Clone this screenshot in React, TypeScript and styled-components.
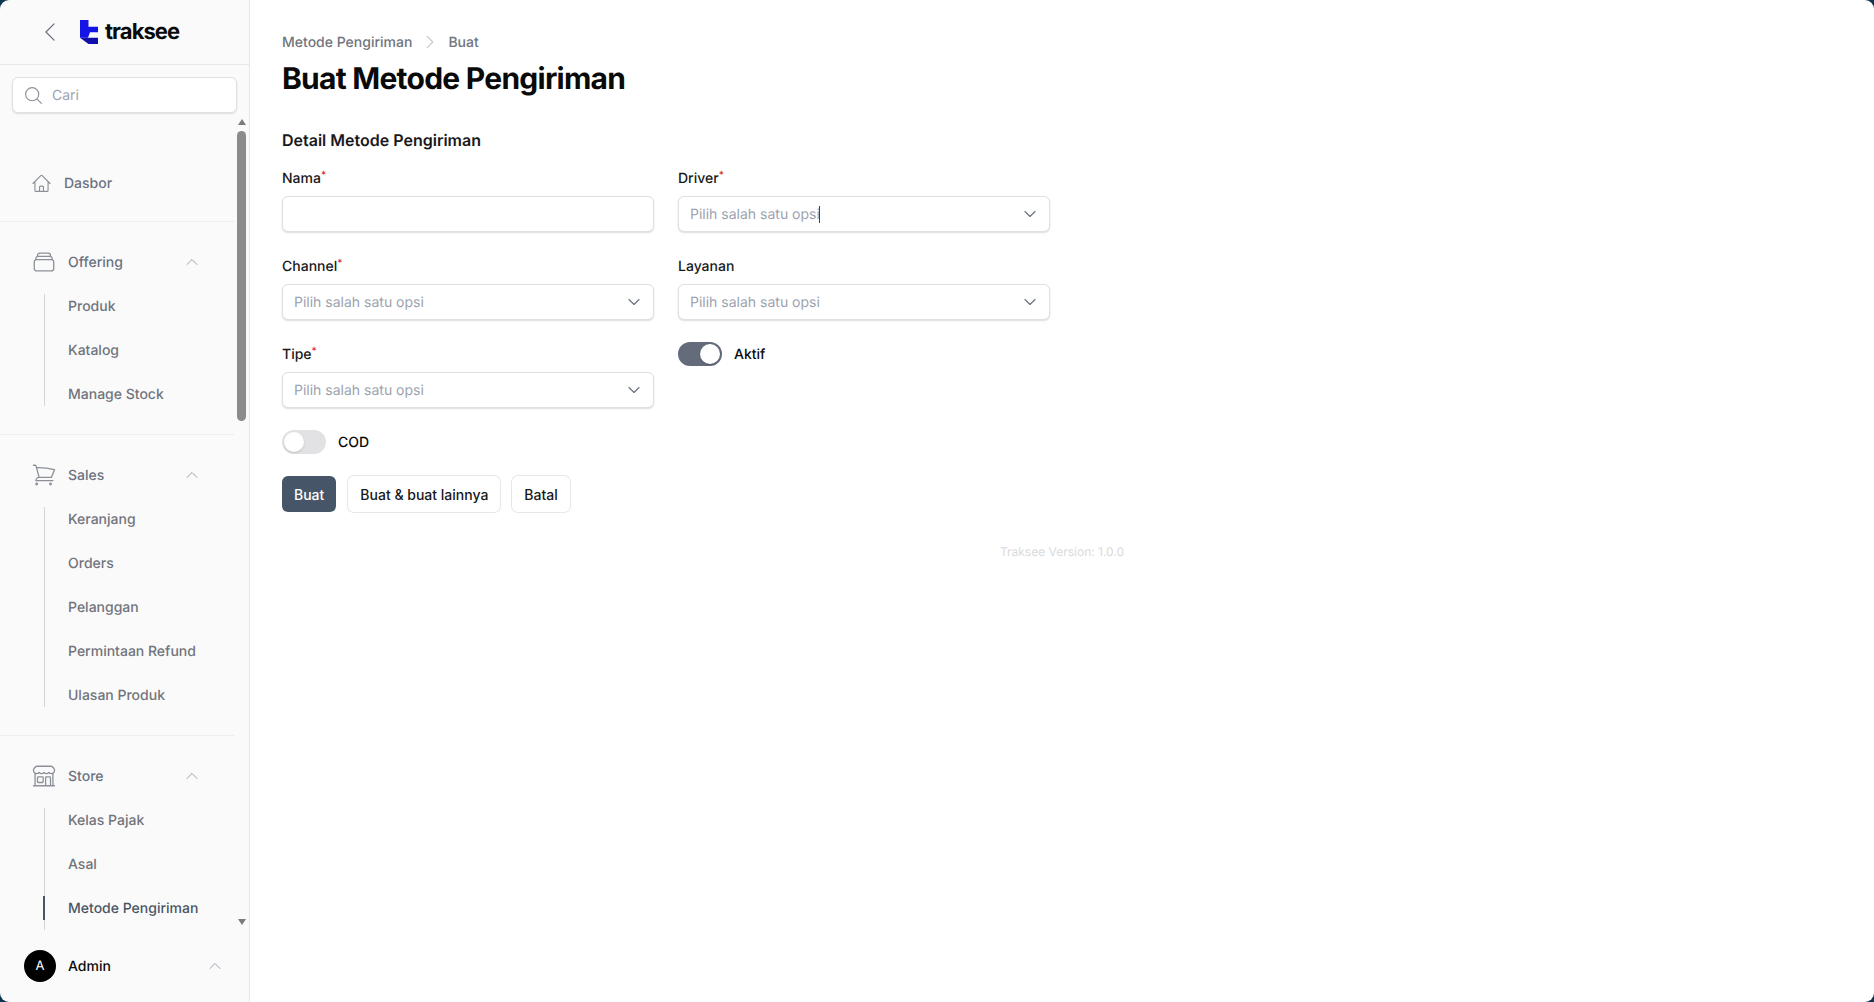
import React from "react";
import styled, { createGlobalStyle } from "styled-components";
import { ChevronDown } from "lucide-react";
import {
  HiOutlineBuildingStorefront,
  HiOutlineChevronLeft,
  HiOutlineChevronRight,
  HiOutlineChevronUp,
  HiOutlineHome,
  HiOutlineMagnifyingGlass,
  HiOutlineRectangleStack,
  HiOutlineShoppingCart,
} from "react-icons/hi2";

const GlobalStyle = createGlobalStyle`
  html, body {
    margin: 0;
    padding: 0;
    height: 100%;
    background: #0c3550;
  }
  * {
    box-sizing: border-box;
  }
  body {
    font-family: Inter, "Liberation Sans", sans-serif;
    text-rendering: geometricPrecision;
    overflow: hidden;
  }
`;

const Frame = styled.div`
  display: flex;
  width: 1874px;
  height: 1002px;
`;

const Sidebar = styled.aside`
  width: 250px;
  flex: none;
  display: flex;
  flex-direction: column;
  background: #fafafa;
  border-right: 1px solid #e5e7eb;
  border-radius: 9px 0 0 9px;
`;

const Brand = styled.div`
  height: 65px;
  flex: none;
  display: flex;
  align-items: center;
  padding-left: 37px;
  gap: 17px;
  border-bottom: 1px solid #e5e7eb;
  color: #6b7280;
`;

const LogoGroup = styled.div`
  display: flex;
  align-items: center;
  gap: 7px;
`;

const LogoWord = styled.span`
  font-size: 22px;
  font-weight: 700;
  letter-spacing: -0.95px;
  color: #0a0a0a;
`;

const SearchBox = styled.div`
  margin: 12px 12px 0 12px;
  height: 36px;
  flex: none;
  display: flex;
  align-items: center;
  gap: 8px;
  padding: 0 10px;
  background: #fff;
  border: 1px solid #e0e1e4;
  border-radius: 6px;
  box-shadow: 0 1px 2px rgba(0, 0, 0, 0.12);
  color: #9ca3af;
  font-size: 14px;
`;

const ScrollArea = styled.div`
  flex: 1;
  min-height: 0;
  margin-top: 3px;
  position: relative;
  overflow: hidden;
`;

const NavList = styled.nav`
  width: 234px;
  padding-top: 56px;
`;

const Section = styled.section<{ $last?: boolean; $pad?: number }>`
  padding-bottom: ${(p) => (p.$last ? 0 : p.$pad ?? 28)}px;
  margin-bottom: 29px;
  border-bottom: ${(p) => (p.$last ? "none" : "1px solid #eceef0")};
`;

const TopItem = styled.div`
  height: 22px;
  display: flex;
  align-items: center;
  color: #6b7280;
  font-size: 14px;
  font-weight: 500;
  padding: 0 34px 0 31px;
`;

const IconSlot = styled.span<{ $small?: boolean }>`
  width: ${(p) => (p.$small ? "33px" : "37px")};
  flex: none;
  display: flex;
  align-items: center;
  color: #8b9099;
`;

const TopLabel = styled.span`
  flex: 1;
`;

const SubList = styled.div<{ $open?: boolean }>`
  margin: 21px 0 0 44px;
  padding-bottom: ${(p) => (p.$open ? "40px" : "0")};
  display: flex;
  flex-direction: column;
  gap: 20px;
  border-left: 1px solid #d4d5d8;
`;

const SubItem = styled.div<{ $active?: boolean }>`
  position: relative;
  height: 24px;
  display: flex;
  align-items: center;
  padding-left: 23px;
  font-size: 14px;
  font-weight: 500;
  color: ${(p) => (p.$active ? "#4b5563" : "#71747c")};

  ${(p) =>
    p.$active &&
    `&::before {
      content: "";
      position: absolute;
      left: -2px;
      top: 0;
      width: 2px;
      height: 24px;
      background: #475569;
    }`}
`;

const Track = styled.div`
  position: absolute;
  top: 0;
  right: 3px;
  bottom: 0;
  width: 9px;
  display: flex;
  flex-direction: column;
  align-items: center;
`;

const Arrow = styled.div<{ $down?: boolean }>`
  position: absolute;
  ${(p) => (p.$down ? "bottom: 5px;" : "top: 3px;")}
  width: 0;
  height: 0;
  border-left: 4px solid transparent;
  border-right: 4px solid transparent;
  ${(p) => (p.$down ? "border-top: 6px solid #7b7b7b;" : "border-bottom: 6px solid #7b7b7b;")}
`;

const Thumb = styled.div`
  position: absolute;
  top: 15px;
  width: 9px;
  height: 290px;
  border-radius: 5px;
  background: #8b8b8b;
`;

const Footer = styled.div`
  height: 72px;
  flex: none;
  display: flex;
  align-items: center;
  padding: 0 26px 0 24px;
  color: #0a0a0a;
  font-size: 14px;
  font-weight: 500;
`;

const Avatar = styled.div`
  width: 32px;
  height: 32px;
  border-radius: 50%;
  background: #000;
  color: #fff;
  display: flex;
  align-items: center;
  justify-content: center;
  font-size: 13px;
  font-weight: 400;
  margin-right: 12px;
`;

const Main = styled.main`
  flex: 1;
  padding: 32px 32px 0 32px;
  background: #fff;
  border-radius: 0 9px 9px 0;
`;

const Crumbs = styled.div`
  display: flex;
  align-items: center;
  height: 20px;
  font-size: 14px;
  font-weight: 500;
  color: #71747c;
  gap: 9px;
`;

const Title = styled.h1`
  margin: 9px 0 0 0;
  font-size: 30px;
  line-height: 36px;
  font-weight: 700;
  letter-spacing: -0.75px;
  color: #0a0a0a;
`;

const SectionTitle = styled.h2`
  margin: 31px 0 0 0;
  font-size: 16px;
  line-height: 24px;
  font-weight: 600;
  color: #18181b;
`;

const FormGrid = styled.div`
  margin-top: 16px;
  width: 767px;
  display: grid;
  grid-template-columns: 372px 372px;
  column-gap: 24px;
  row-gap: 24px;
  align-items: start;
`;

const Field = styled.div``;

const Label = styled.div`
  height: 20px;
  margin-bottom: 8px;
  font-size: 14px;
  line-height: 22px;
  font-weight: 500;
  color: #18181b;
`;

const Req = styled.sup`
  color: #dc2626;
  font-size: 10px;
  line-height: 0;
  font-weight: 500;
  vertical-align: 5px;
`;

const InputBox = styled.div`
  height: 36px;
  display: flex;
  align-items: center;
  justify-content: space-between;
  padding: 0 9px 0 11px;
  background: #fff;
  border: 1px solid #dfe0e3;
  border-radius: 6px;
  box-shadow: 0 1px 2px rgba(0, 0, 0, 0.14);
  color: #9ca3af;
  font-size: 14px;
`;

const Placeholder = styled.span<{ $focused?: boolean }>`
  position: relative;
  display: inline-block;
  line-height: 17px;

  ${(p) =>
    p.$focused &&
    `&::after {
      content: "";
      position: absolute;
      right: 0;
      top: 0;
      width: 1px;
      height: 17px;
      background: #374151;
    }`}
`;

const ToggleRow = styled.div`
  display: flex;
  align-items: center;
  gap: 12px;
  height: 24px;
  margin-top: -2px;
  font-size: 14px;
  font-weight: 500;
  color: #0a0a0a;
`;

const Toggle = styled.div<{ $on?: boolean }>`
  position: relative;
  width: 44px;
  height: 24px;
  border-radius: 12px;
  background: ${(p) => (p.$on ? "#646b7b" : "#e2e2e4")};
`;

const Knob = styled.div<{ $on?: boolean }>`
  position: absolute;
  top: 2px;
  left: ${(p) => (p.$on ? "22px" : "2px")};
  width: 20px;
  height: 20px;
  border-radius: 50%;
  background: #fff;
  box-shadow: 0 1px 2px rgba(0, 0, 0, 0.15);
`;

const Actions = styled.div`
  display: flex;
  gap: 12px;
  margin-top: 22px;
`;

const Button = styled.button<{ $primary?: boolean }>`
  height: 36px;
  padding: 0 12px;
  border-radius: 6px;
  border: none;
  background: ${(p) => (p.$primary ? "#475569" : "#fff")};
  box-shadow: ${(p) => (p.$primary ? "none" : "0 0 0 1px #e5e7eb")};
  color: ${(p) => (p.$primary ? "#fff" : "#18181b")};
  font-family: inherit;
  font-size: 14px;
  font-weight: 500;
`;

const Version = styled.div`
  margin-top: 32px;
  text-align: center;
  font-size: 12px;
  line-height: 16px;
  color: #d9dade;
`;

const Logo = () => (
  <svg width="18" height="24" viewBox="0 0 18 24">
    <path d="M0 0 H8.5 V6.7 H18 V12.3 H10 L8 17.7 H0 Z" fill="#1414e6" />
    <path d="M0 17.7 H18 V24 H8.5 Z" fill="#1010a8" />
  </svg>
);

const sections = [
  { label: "Offering", icon: <HiOutlineRectangleStack size={26} strokeWidth={1.2} />, items: ["Produk", "Katalog", "Manage Stock"] },
  { label: "Sales", icon: <HiOutlineShoppingCart size={26} strokeWidth={1.2} />, items: ["Keranjang", "Orders", "Pelanggan", "Permintaan Refund", "Ulasan Produk"] },
  { label: "Store", icon: <HiOutlineBuildingStorefront size={26} strokeWidth={1.2} />, items: ["Kelas Pajak", "Asal", "Metode Pengiriman"] },
];

const SelectField: React.FC<{ label: string; required?: boolean; focused?: boolean }> = ({ label, required, focused }) => (
  <Field>
    <Label>
      {label}
      {required && <Req>*</Req>}
    </Label>
    <InputBox>
      <Placeholder $focused={focused}>Pilih salah satu opsi</Placeholder>
      <ChevronDown size={20} strokeWidth={1.4} color="#6b7280" />
    </InputBox>
  </Field>
);

const App: React.FC = () => {
  return (
    <Frame>
      <GlobalStyle />
      <Sidebar>
        <Brand>
          <HiOutlineChevronLeft size={26} strokeWidth={1.2} />
          <LogoGroup>
            <Logo />
            <LogoWord>traksee</LogoWord>
          </LogoGroup>
        </Brand>
        <SearchBox>
          <HiOutlineMagnifyingGlass size={21} strokeWidth={1.3} color="#8b9099" />
          Cari
        </SearchBox>
        <ScrollArea>
          <NavList>
            <Section $pad={27}>
              <TopItem>
                <IconSlot $small>
                  <HiOutlineHome size={21} strokeWidth={1.3} />
                </IconSlot>
                <TopLabel>Dasbor</TopLabel>
              </TopItem>
            </Section>
            {sections.map((s, i) => {
              const last = i === sections.length - 1;
              return (
                <Section key={s.label} $last={last}>
                  <TopItem>
                    <IconSlot>{s.icon}</IconSlot>
                    <TopLabel>{s.label}</TopLabel>
                    <HiOutlineChevronUp size={16} color="#9ca3af" />
                  </TopItem>
                  <SubList $open={last}>
                    {s.items.map((item) => (
                      <SubItem key={item} $active={item === "Metode Pengiriman"}>
                        {item}
                      </SubItem>
                    ))}
                  </SubList>
                </Section>
              );
            })}
          </NavList>
          <Track>
            <Arrow />
            <Thumb />
            <Arrow $down />
          </Track>
        </ScrollArea>
        <Footer>
          <Avatar>A</Avatar>
          <TopLabel>Admin</TopLabel>
          <HiOutlineChevronUp size={16} color="#9ca3af" />
        </Footer>
      </Sidebar>
      <Main>
        <Crumbs>
          Metode Pengiriman
          <HiOutlineChevronRight size={18} color="#c4c6cb" />
          Buat
        </Crumbs>
        <Title>Buat Metode Pengiriman</Title>
        <SectionTitle>Detail Metode Pengiriman</SectionTitle>
        <FormGrid>
          <Field>
            <Label>
              Nama<Req>*</Req>
            </Label>
            <InputBox />
          </Field>
          <SelectField label="Driver" required focused />
          <SelectField label="Channel" required />
          <SelectField label="Layanan" />
          <SelectField label="Tipe" required />
          <ToggleRow>
            <Toggle $on>
              <Knob $on />
            </Toggle>
            Aktif
          </ToggleRow>
          <ToggleRow>
            <Toggle>
              <Knob />
            </Toggle>
            COD
          </ToggleRow>
        </FormGrid>
        <Actions>
          <Button $primary>Buat</Button>
          <Button>Buat &amp; buat lainnya</Button>
          <Button>Batal</Button>
        </Actions>
        <Version>Traksee Version: 1.0.0</Version>
      </Main>
    </Frame>
  );
};

export default App;
